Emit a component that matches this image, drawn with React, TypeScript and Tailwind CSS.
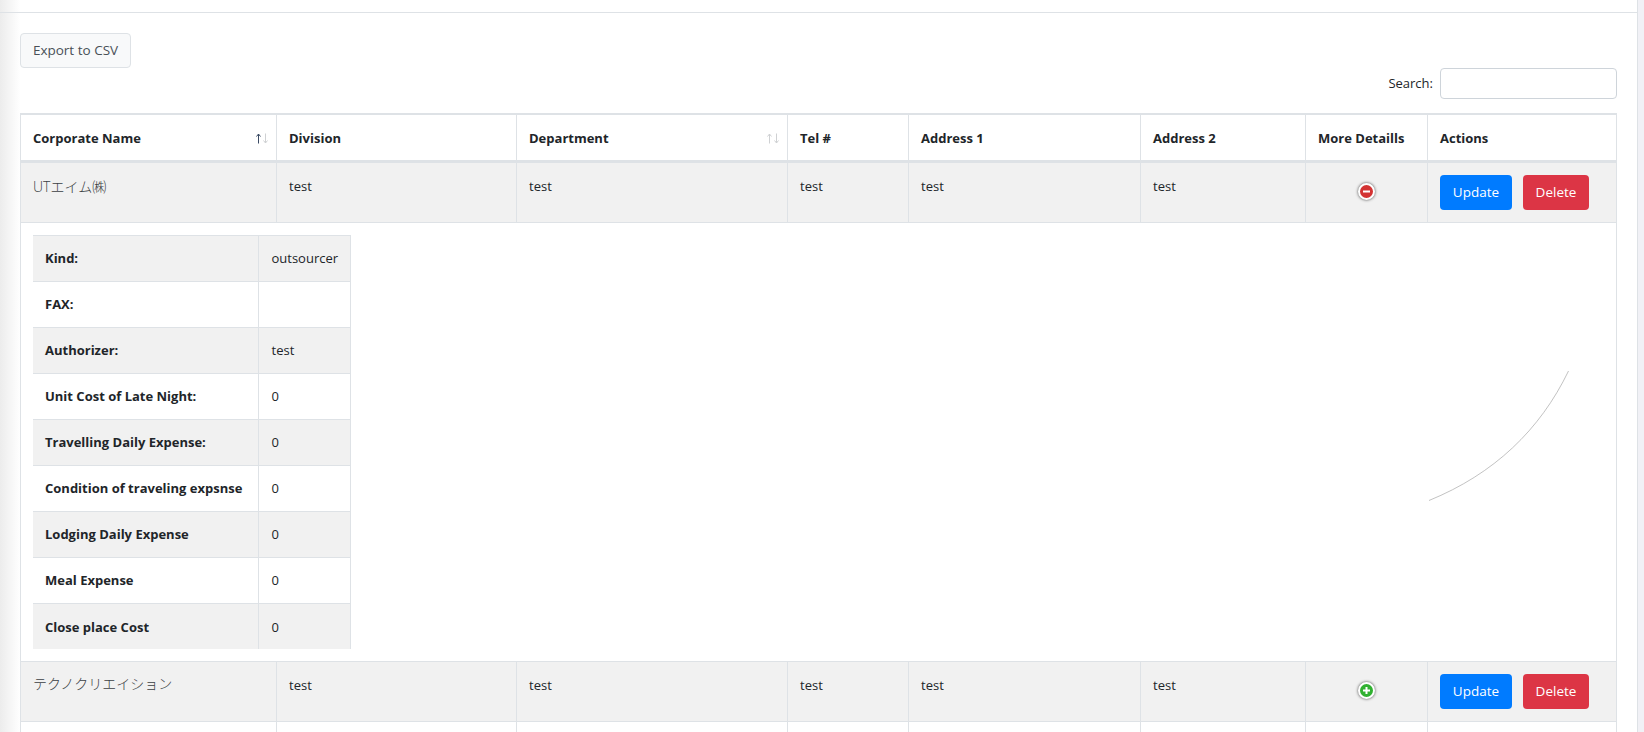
import type { ReactNode } from "react";

const cols = [
  { name: "Corporate Name", width: "w-[256px]", sort: "active" },
  { name: "Division", width: "w-[240px]" },
  { name: "Department", width: "w-[271px]", sort: "idle" },
  { name: "Tel #", width: "w-[121px]" },
  { name: "Address 1", width: "w-[232px]" },
  { name: "Address 2", width: "w-[165px]" },
  { name: "More Detaills", width: "w-[122px]" },
  { name: "Actions", width: "w-[189px]" },
];

const details = [
  ["Kind:", "outsourcer"],
  ["FAX:", ""],
  ["Authorizer:", "test"],
  ["Unit Cost of Late Night:", "0"],
  ["Travelling Daily Expense:", "0"],
  ["Condition of traveling expsnse", "0"],
  ["Lodging Daily Expense", "0"],
  ["Meal Expense", "0"],
  ["Close place Cost", "0"],
];

function Td({ children }: { children?: ReactNode }) {
  return <td className="border border-[#dee2e6] p-3 align-top leading-[23px]">{children}</td>;
}

function Toggle({ open }: { open: boolean }) {
  return (
    <span
      className={
        open
          ? "mt-[8px] ml-[40px] flex h-[17px] w-[17px] items-center justify-center rounded-full border-2 border-white bg-[#d33333] shadow-[0_0_3px_#444]"
          : "mt-[8px] ml-[40px] flex h-[17px] w-[17px] items-center justify-center rounded-full border-2 border-white bg-[#31b131] shadow-[0_0_3px_#444]"
      }
    >
      <svg width="9" height="9" viewBox="0 0 9 9" fill="#fff">
        <rect x="1" y="3.5" width="7" height="2" />
        {!open && <rect x="3.500" y="1" width="2" height="7" />}
      </svg>
    </span>
  );
}

function SortArrows({ active }: { active: boolean }) {
  return (
    <span className="-mr-[5px] -mb-[1px] flex">
      <svg width="7" height="11" viewBox="0 0 7 11" fill="none" stroke={active ? "#3a4a63" : "#cfd1d3"} strokeWidth="1">
        <path d="M3.500 10.500V1M1.500 3.500L3.500 1L5.500 3.500" />
      </svg>
      <svg width="7" height="11" viewBox="0 0 7 11" fill="none" stroke="#cfd1d3" strokeWidth="1">
        <path d="M3.500 0.500V10M1.500 7.500L3.500 10L5.500 7.500" />
      </svg>
    </span>
  );
}

function Row({ name, open }: { name: ReactNode; open: boolean }) {
  return (
    <tr className="bg-[#f1f1f1]">
      <Td>{name}</Td>
      <Td>test</Td>
      <Td>test</Td>
      <Td>test</Td>
      <Td>test</Td>
      <Td>test</Td>
      <Td>
        <Toggle open={open} />
      </Td>
      <Td>
        <div className="flex gap-[11px]">
          <button className="h-[35px] w-[72px] rounded bg-[#007bff] text-[13.5px] text-white">Update</button>
          <button className="h-[35px] w-[66px] rounded bg-[#dc3545] text-[13.5px] text-white">Delete</button>
        </div>
      </Td>
    </tr>
  );
}

function DetailTable() {
  return (
    <table className="w-[317px] table-fixed border-collapse">
      <colgroup>
        <col className="w-[225px]" />
        <col className="w-[92px]" />
      </colgroup>
      <tbody>
        {details.map(([label, value], i) => (
          <tr key={label} className={i % 2 === 0 ? "bg-[#f1f1f1]" : "bg-white"}>
            <td className="h-[46px] border-t border-r border-[#dee2e6] px-3 pt-[2px] font-bold whitespace-nowrap">{label}</td>
            <td className="h-[46px] border-t border-r border-[#dee2e6] pt-[2px] pr-3 pl-[13px]">{value}</td>
          </tr>
        ))}
      </tbody>
    </table>
  );
}

export default function App() {
  return (
    <div className="flex h-[732px] overflow-hidden bg-white font-['Open_Sans','Noto_Sans_CJK_JP',sans-serif] text-[13px] text-[#212529]">
      <div className="w-5 shrink-0 bg-gradient-to-r from-[#ececec] to-white" />
      <div className="min-w-0 flex-1">
        <div className="-ml-5 h-[13px] border-b border-[#dee2e6]" />
        <div className="pt-5 pr-5">
          <button className="h-[35px] w-[111px] rounded border border-[#dee2e6] bg-[#f8f9fa] text-[13.5px] text-[#495057]">
            Export to CSV
          </button>
          <div className="flex h-[45px] items-center justify-end gap-[7px] pb-[14px]">
            <label>Search:</label>
            <input className="h-[31px] w-[177px] rounded border border-[#ced4da] bg-white" />
          </div>
          <table className="w-[1596px] table-fixed border-collapse border-t-2 border-[#dee2e6]">
            <colgroup>
              {cols.map((c) => (
                <col key={c.name} className={c.width} />
              ))}
            </colgroup>
            <thead>
              <tr>
                {cols.map((c) => (
                  <th key={c.name} className="h-[47px] border border-b-[3px] border-[#dee2e6] px-3 pt-[2px] text-left font-bold">
                    <div className="flex items-center justify-between">
                      <span>{c.name}</span>
                      {c.sort && <SortArrows active={c.sort === "active"} />}
                    </div>
                  </th>
                ))}
              </tr>
            </thead>
            <tbody>
              <Row name={<span className="text-[14px] font-light text-[#3b3f44]">UTエイム㈱</span>} open />
              <tr>
                <td colSpan={8} className="relative border border-[#dee2e6] p-3">
                  <DetailTable />
                  <svg className="absolute top-[147px] left-[1407px]" width="142" height="132" viewBox="0 0 142 132" fill="none">
                    <path d="M1 130.500C66 104 112 60 140.500 1" stroke="#a8a8a8" strokeWidth="0.7" />
                  </svg>
                </td>
              </tr>
              <Row name={<span className="block text-[14px] leading-[19px] font-light text-[#3b3f44]">テクノクリエイション</span>} open={false} />
              <tr>
                {cols.map((c) => (
                  <td key={c.name} className="h-[60px] border border-[#dee2e6]" />
                ))}
              </tr>
            </tbody>
          </table>
        </div>
      </div>
      <div className="w-[7px] shrink-0 border-l border-[#dee2e6] bg-[#f1f1f6]" />
    </div>
  );
}
